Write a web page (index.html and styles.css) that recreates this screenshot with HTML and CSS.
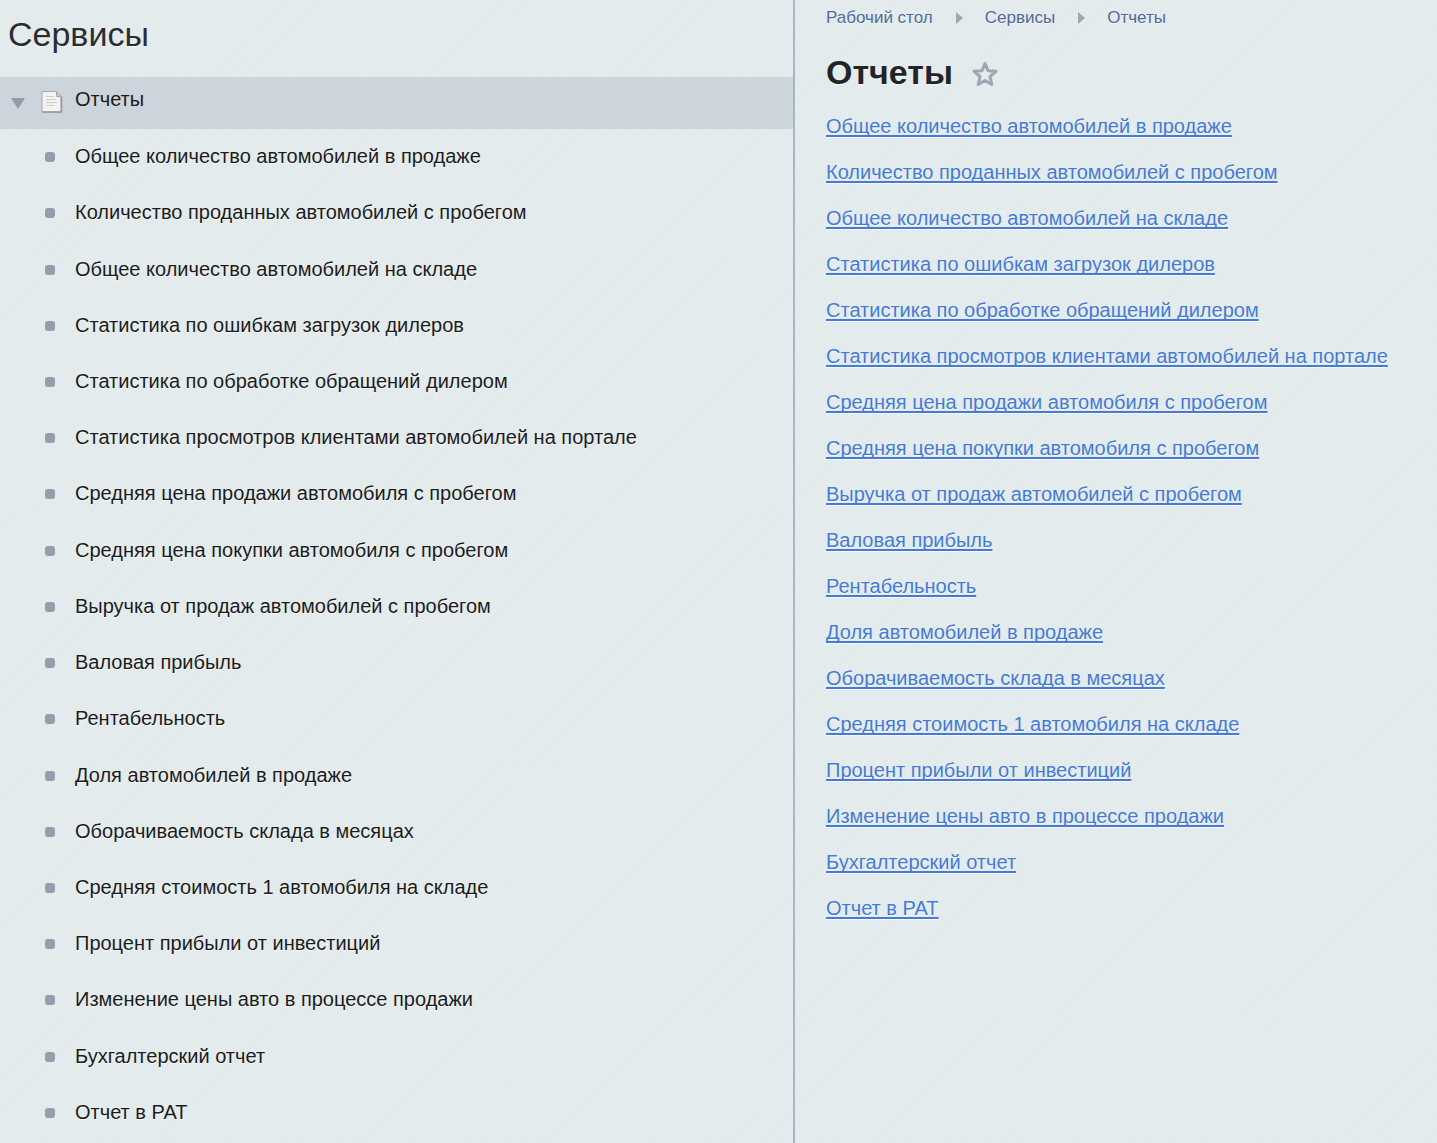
FILE: index.html
```html
<!DOCTYPE html>
<html lang="ru">
<head>
<meta charset="utf-8">
<meta name="viewport" content="width=device-width, initial-scale=1">
<title>Отчеты</title>
<link rel="stylesheet" href="styles.css">
</head>
<body>
<div class="layout">
  <nav class="sidebar" aria-labelledby="sidebar-title">
    <h2 class="sidebar-title" id="sidebar-title">Сервисы</h2>
    <div class="section">
      <button class="toggle" type="button" aria-label="Свернуть" aria-expanded="true">
        <svg width="14" height="12" viewBox="0 0 14 12"><path d="M0 1h14L7 12z" fill="#959bab"/></svg>
      </button>
      <svg class="page-icon" width="22" height="24" viewBox="0 0 22 24" aria-hidden="true">
        <path d="M1 1.500h14.500l4.500 4.500v16h-19z" fill="#f3f3f2" stroke="#a6a9ac"/>
        <path d="M1 22h19.500V6.500" fill="none" stroke="#94979b" stroke-width="1.500"/>
        <path d="M15.500 1.500v5h5z" fill="#c8cbcd" stroke="#a6a9ac"/>
        <path d="M5 6.500h8M5 9.500h10M5 12.500h11M5 15.500h9" stroke="#cdcdcb"/>
      </svg>
      <a class="tree-link" href="#">Отчеты</a>
    </div>
    <ul class="tree">
      <li><a class="tree-link" href="#">Общее количество автомобилей в продаже</a></li>
      <li><a class="tree-link" href="#">Количество проданных автомобилей с пробегом</a></li>
      <li><a class="tree-link" href="#">Общее количество автомобилей на складе</a></li>
      <li><a class="tree-link" href="#">Статистика по ошибкам загрузок дилеров</a></li>
      <li><a class="tree-link" href="#">Статистика по обработке обращений дилером</a></li>
      <li><a class="tree-link" href="#">Статистика просмотров клиентами автомобилей на портале</a></li>
      <li><a class="tree-link" href="#">Средняя цена продажи автомобиля с пробегом</a></li>
      <li><a class="tree-link" href="#">Средняя цена покупки автомобиля с пробегом</a></li>
      <li><a class="tree-link" href="#">Выручка от продаж автомобилей с пробегом</a></li>
      <li><a class="tree-link" href="#">Валовая прибыль</a></li>
      <li><a class="tree-link" href="#">Рентабельность</a></li>
      <li><a class="tree-link" href="#">Доля автомобилей в продаже</a></li>
      <li><a class="tree-link" href="#">Оборачиваемость склада в месяцах</a></li>
      <li><a class="tree-link" href="#">Средняя стоимость 1 автомобиля на складе</a></li>
      <li><a class="tree-link" href="#">Процент прибыли от инвестиций</a></li>
      <li><a class="tree-link" href="#">Изменение цены авто в процессе продажи</a></li>
      <li><a class="tree-link" href="#">Бухгалтерский отчет</a></li>
      <li><a class="tree-link" href="#">Отчет в РАТ</a></li>
    </ul>
  </nav>
  <main class="content">
    <nav class="breadcrumbs" aria-label="Навигация">
      <a href="#">Рабочий стол</a>
      <svg width="8" height="12" viewBox="0 0 8 12" aria-hidden="true"><path d="M1 0l7 6-7 6z" fill="#a1a7ab"/></svg>
      <a href="#">Сервисы</a>
      <svg width="8" height="12" viewBox="0 0 8 12" aria-hidden="true"><path d="M1 0l7 6-7 6z" fill="#a1a7ab"/></svg>
      <a href="#">Отчеты</a>
    </nav>
    <div class="heading">
      <h1>Отчеты</h1>
      <button class="favorite" type="button" aria-label="Добавить в избранное">
        <svg width="28" height="28" viewBox="0 0 28 28"><path d="M14 3.500l3 7.200 8 .6-6 5.200 1.800 8L14 20.500l-6.800 4 1.800-8-6-5.200 8-.6z" fill="none" stroke="#a0a5b3" stroke-width="3" stroke-linejoin="round"/></svg>
      </button>
    </div>
    <ul class="reports">
      <li><a href="#">Общее количество автомобилей в продаже</a></li>
      <li><a href="#">Количество проданных автомобилей с пробегом</a></li>
      <li><a href="#">Общее количество автомобилей на складе</a></li>
      <li><a href="#">Статистика по ошибкам загрузок дилеров</a></li>
      <li><a href="#">Статистика по обработке обращений дилером</a></li>
      <li><a href="#">Статистика просмотров клиентами автомобилей на портале</a></li>
      <li><a href="#">Средняя цена продажи автомобиля с пробегом</a></li>
      <li><a href="#">Средняя цена покупки автомобиля с пробегом</a></li>
      <li><a href="#">Выручка от продаж автомобилей с пробегом</a></li>
      <li><a href="#">Валовая прибыль</a></li>
      <li><a href="#">Рентабельность</a></li>
      <li><a href="#">Доля автомобилей в продаже</a></li>
      <li><a href="#">Оборачиваемость склада в месяцах</a></li>
      <li><a href="#">Средняя стоимость 1 автомобиля на складе</a></li>
      <li><a href="#">Процент прибыли от инвестиций</a></li>
      <li><a href="#">Изменение цены авто в процессе продажи</a></li>
      <li><a href="#">Бухгалтерский отчет</a></li>
      <li><a href="#">Отчет в РАТ</a></li>
    </ul>
  </main>
</div>
</body>
</html>
```
FILE: styles.css
```css
* {
  box-sizing: border-box;
}

body {
  margin: 0;
  background: #e3ebed;
  color: #1c1c1c;
  font-family: "Liberation Sans", Arial, sans-serif;
  font-size: 20px;
  line-height: 24px;
  text-shadow: 0 1px 0 #f5f9f9;
}

h1,
h2,
ul {
  margin: 0;
  padding: 0;
}

ul {
  list-style: none;
}

a {
  text-decoration: none;
}

button {
  display: flex;
  padding: 0;
  border: 0;
  background: none;
  cursor: pointer;
}

.layout {
  display: grid;
  grid-template-columns: 795fr 642fr;
  min-height: 100vh;
  background-image: repeating-linear-gradient(135deg, #e4eced 0, #e2eaec 5px, #e4eced 10px);
}

.sidebar {
  display: flex;
  flex-direction: column;
  border-right: 2px solid #a4b8cb;
  padding-bottom: 2px;
}

.sidebar-title {
  padding: 14px 8px 23px;
  color: #2b2d31;
  font-size: 34px;
  font-weight: 400;
  line-height: 40px;
}

.section {
  display: flex;
  align-items: center;
  height: 52px;
  padding: 0 11px;
  background: #cdd5dc;
  text-shadow: none;
}

.page-icon {
  margin: 0 12px 2px 16px;
}

.section .tree-link {
  padding-bottom: 8px;
}

.tree-link {
  padding-bottom: 2px;
  color: #1c1c1c;
}

.tree {
  display: grid;
  flex: 1;
  grid-auto-rows: 1fr;
}

.tree li {
  display: flex;
  align-items: center;
  gap: 20px;
  padding-left: 45px;
}

.tree li::before {
  content: "";
  width: 10px;
  height: 10px;
  border-radius: 3px;
  background: #979daa;
}

.content {
  padding: 6px 31px;
}

.breadcrumbs {
  display: flex;
  align-items: center;
  gap: 22px;
  font-size: 17px;
}

.breadcrumbs a {
  color: #50699c;
}

.heading {
  display: flex;
  align-items: center;
  gap: 18px;
  margin: 22px 0;
}

.heading h1 {
  color: #222427;
  font-size: 34px;
  line-height: 40px;
}

.favorite {
  padding-top: 4px;
}

.reports {
  display: grid;
  gap: 22px;
}

.reports a {
  color: #457ad6;
  text-decoration: underline;
  text-decoration-thickness: 2px;
  text-decoration-skip-ink: none;
  text-underline-offset: 2px;
}
```
